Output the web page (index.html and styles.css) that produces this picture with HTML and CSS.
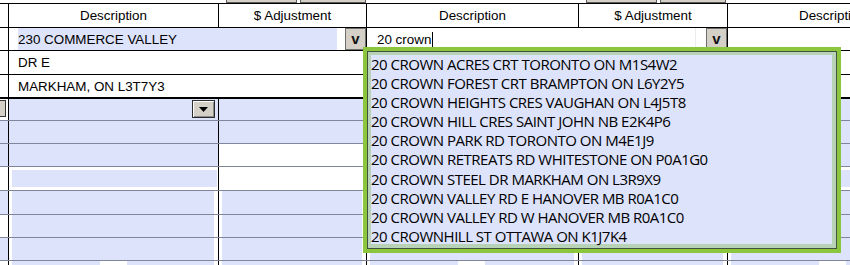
FILE: index.html
```html
<!DOCTYPE html>
<html lang="en">
<head>
  <meta charset="UTF-8">
  <title>Adjustments - Address Lookup</title>
  <link rel="stylesheet" href="styles.css">
</head>
<body>
  <div class="sheet">
    <div class="tabs">
      <span></span>
      <span></span>
      <span class="tab-pair"><i class="tab"></i><i class="tab short"></i></span>
      <span></span>
      <span class="tab-pair"><i class="tab"></i><i class="tab short"></i></span>
      <span></span>
    </div>

    <div class="row head">
      <div></div>
      <div class="cell">Description</div>
      <div class="cell">$ Adjustment</div>
      <div class="cell">Description</div>
      <div class="cell">$ Adjustment</div>
      <div class="cell">Description</div>
    </div>

    <div class="row addr">
      <div></div>
      <div class="cell span">
        <div class="entry filled">230 COMMERCE VALLEY</div>
        <button class="pick">v</button>
      </div>
      <div class="cell span">
        <div class="entry focused">20 crown<span class="caret"></span></div>
        <button class="pick">v</button>
      </div>
      <div class="cell"></div>
    </div>
    <div class="row addr tall">
      <div></div>
      <div class="cell span"><div class="entry">DR E</div></div>
      <div class="cell span"><div class="entry"></div></div>
      <div class="cell"></div>
    </div>
    <div class="row addr tall last">
      <div></div>
      <div class="cell span"><div class="entry">MARKHAM, ON L3T7Y3</div></div>
      <div class="cell span"><div class="entry"></div></div>
      <div class="cell"></div>
    </div>

    <div class="row line short-row">
      <div class="stub"><span class="stub-btn"></span></div>
      <div class="cell blue drop"><button class="dd"><svg width="9" height="5" viewBox="0 0 9 5"><polygon points="0,0 9,0 4.5,5" fill="#000"/></svg></button></div>
      <div class="cell blue"></div>
      <div class="cell blue drop"><button class="dd"><svg width="9" height="5" viewBox="0 0 9 5"><polygon points="0,0 9,0 4.5,5" fill="#000"/></svg></button></div>
      <div class="cell blue"></div>
      <div class="cell blue"></div>
    </div>
    <div class="row line">
      <div class="stub blue"></div>
      <div class="cell blue"></div>
      <div class="cell blue"></div>
      <div class="cell blue"></div>
      <div class="cell blue"></div>
      <div class="cell blue"></div>
    </div>
    <div class="row line">
      <div class="stub blue"></div>
      <div class="cell blue"></div>
      <div class="cell"></div>
      <div class="cell blue"></div>
      <div class="cell"></div>
      <div class="cell blue"></div>
    </div>
    <div class="row line tall">
      <div class="stub"></div>
      <div class="cell inset"><div class="field"></div></div>
      <div class="cell"></div>
      <div class="cell inset"><div class="field"></div></div>
      <div class="cell"></div>
      <div class="cell inset"><div class="field"></div></div>
    </div>
    <div class="row line tall">
      <div class="stub blue"></div>
      <div class="cell boxed"><div class="field"></div></div>
      <div class="cell boxed"><div class="field"></div></div>
      <div class="cell boxed"><div class="field"></div></div>
      <div class="cell boxed"><div class="field"></div></div>
      <div class="cell boxed"><div class="field"></div></div>
    </div>
    <div class="row line">
      <div class="stub"></div>
      <div class="cell boxed"><div class="field"></div></div>
      <div class="cell boxed"><div class="field"></div></div>
      <div class="cell boxed"><div class="field"></div></div>
      <div class="cell boxed"><div class="field"></div></div>
      <div class="cell boxed"><div class="field"></div></div>
    </div>
    <div class="row line">
      <div class="stub blue"></div>
      <div class="cell boxed"><div class="field"></div></div>
      <div class="cell boxed"><div class="field"></div></div>
      <div class="cell boxed"><div class="field"></div></div>
      <div class="cell boxed"><div class="field"></div></div>
      <div class="cell boxed"><div class="field"></div></div>
    </div>
    <div class="row tail">
      <div class="stub"></div>
      <div class="cell boxed"><div class="field"><span class="more">&#8744;</span></div></div>
      <div class="cell boxed"><div class="field"></div></div>
      <div class="cell boxed"><div class="field"><span class="more">&#8744;</span></div></div>
      <div class="cell boxed"><div class="field"></div></div>
      <div class="cell boxed"><div class="field"><span class="more">&#8744;</span></div></div>
    </div>

    <div class="suggest">
      <div class="suggest-frame">
        <ul class="suggest-list">
          <li>20 CROWN ACRES CRT TORONTO ON M1S4W2</li>
          <li>20 CROWN FOREST CRT BRAMPTON ON L6Y2Y5</li>
          <li>20 CROWN HEIGHTS CRES VAUGHAN ON L4J5T8</li>
          <li>20 CROWN HILL CRES SAINT JOHN NB E2K4P6</li>
          <li>20 CROWN PARK RD TORONTO ON M4E1J9</li>
          <li>20 CROWN RETREATS RD WHITESTONE ON P0A1G0</li>
          <li>20 CROWN STEEL DR MARKHAM ON L3R9X9</li>
          <li>20 CROWN VALLEY RD E HANOVER MB R0A1C0</li>
          <li>20 CROWN VALLEY RD W HANOVER MB R0A1C0</li>
          <li>20 CROWNHILL ST OTTAWA ON K1J7K4</li>
        </ul>
      </div>
    </div>
  </div>
</body>
</html>
```

FILE: styles.css
```css
body {
  margin: 0;
  font-family: "Liberation Sans", Arial, sans-serif;
  font-size: 13.4px;
  color: #000;
  background-color: #fff;
}

.sheet {
  position: relative;
  width: 850px;
  height: 265px;
  overflow: hidden;
}

.tabs,
.row {
  display: grid;
  grid-template-columns: 8px 210px 148px 212px 149px 210px;
  width: 937px;
}

.tabs {
  height: 3px;
}

.tab-pair {
  display: flex;
  gap: 3px;
  padding-left: 8px;
}

.tab {
  width: 71px;
  height: 3px;
  box-sizing: border-box;
  background-color: #d4d0c8;
  border: 1px solid #5a5a5a;
  border-top: 0;
}

.tab.short {
  width: 66px;
}

.row {
  box-sizing: border-box;
  height: 23px;
  border-bottom: 1px solid #000;
}

.row.tall {
  height: 24px;
}

.cell {
  border-left: 1px solid #000;
  box-sizing: border-box;
}

.cell.span {
  grid-column: span 2;
}

/* header */
.row.head {
  height: 25px;
  border-top: 1px solid #000;
}

.row.head .cell {
  display: flex;
  align-items: center;
  justify-content: center;
  padding-bottom: 1px;
}

/* address rows */
.row.addr .cell {
  display: flex;
  align-items: stretch;
}

.row.addr.last {
  border-bottom-width: 2px;
}

.entry {
  flex: 1;
  display: flex;
  align-items: center;
  padding-left: 9px;
  white-space: nowrap;
}

.entry.filled {
  margin-left: 9px;
  margin-right: 8px;
  padding-left: 0;
  background-color: #dde3fb;
}

.entry.focused {
  padding-left: 10px;
  margin-right: 10px;
  border-right: 1px solid #ececec;
}

.caret {
  display: inline-block;
  width: 1px;
  height: 15px;
  margin-left: 1px;
  background-color: #000;
}

.pick {
  width: 21px;
  margin: 0;
  padding: 0 0 2px;
  box-sizing: border-box;
  background-color: #d4d0c8;
  border: 1px solid #6e6e6e;
  font-family: "Liberation Sans", Arial, sans-serif;
  font-size: 15px;
  font-weight: bold;
  color: #111;
}

/* line item rows */
.row.line,
.row.tail {
  border-bottom-color: #80859a;
}

.row.short-row {
  height: 22px;
}

.row.tail {
  height: 10px;
  border-bottom: 0;
}

.blue {
  background-color: #dde3fb;
}

.stub-btn {
  display: block;
  width: 6px;
  height: 17px;
  margin-top: 1px;
  box-sizing: border-box;
  background-color: #d4d0c8;
  border: 1px solid #333;
  border-left: 0;
}

.drop {
  display: flex;
  justify-content: flex-end;
  align-items: flex-start;
  padding: 1px 3px 0 0;
}

.dd {
  display: flex;
  align-items: center;
  justify-content: center;
  width: 23px;
  height: 18px;
  margin: 0;
  padding: 0;
  box-sizing: border-box;
  background-color: #d4d0c8;
  border: 1px solid #2b2b2b;
  box-shadow: inset 1px 1px 0 #fff, inset -1px -1px 0 #8a8a8a;
}

.cell.boxed {
  padding: 0 4px 0 3px;
}

.cell.inset {
  padding: 3px 1px 3px 3px;
}

.field {
  height: 100%;
  background-color: #dde3fb;
}

.more {
  display: block;
  width: 27px;
  margin-left: 88px;
  height: 10px;
  background-color: #fff;
  text-align: center;
  font-size: 12px;
  line-height: 16px;
}

/* address suggestions */
.suggest {
  position: absolute;
  left: 363px;
  top: 47px;
  width: 478px;
  height: 206px;
  box-sizing: border-box;
  border: 4px solid #8cc63f;
}

.suggest-frame {
  height: 100%;
  box-sizing: border-box;
  border: 1px solid #43523f;
  padding: 3px 4px 4px 3px;
  background-color: #b8d2b8;
}

.suggest-list {
  height: 100%;
  margin: 0;
  padding: 0;
  list-style: none;
  background-color: #dde3fb;
  font-family: "Open Sans", sans-serif;
  font-size: 15px;
  letter-spacing: -0.5px;
  line-height: 19.1px;
  color: #000;
}

.suggest-list li {
  white-space: nowrap;
}
```
